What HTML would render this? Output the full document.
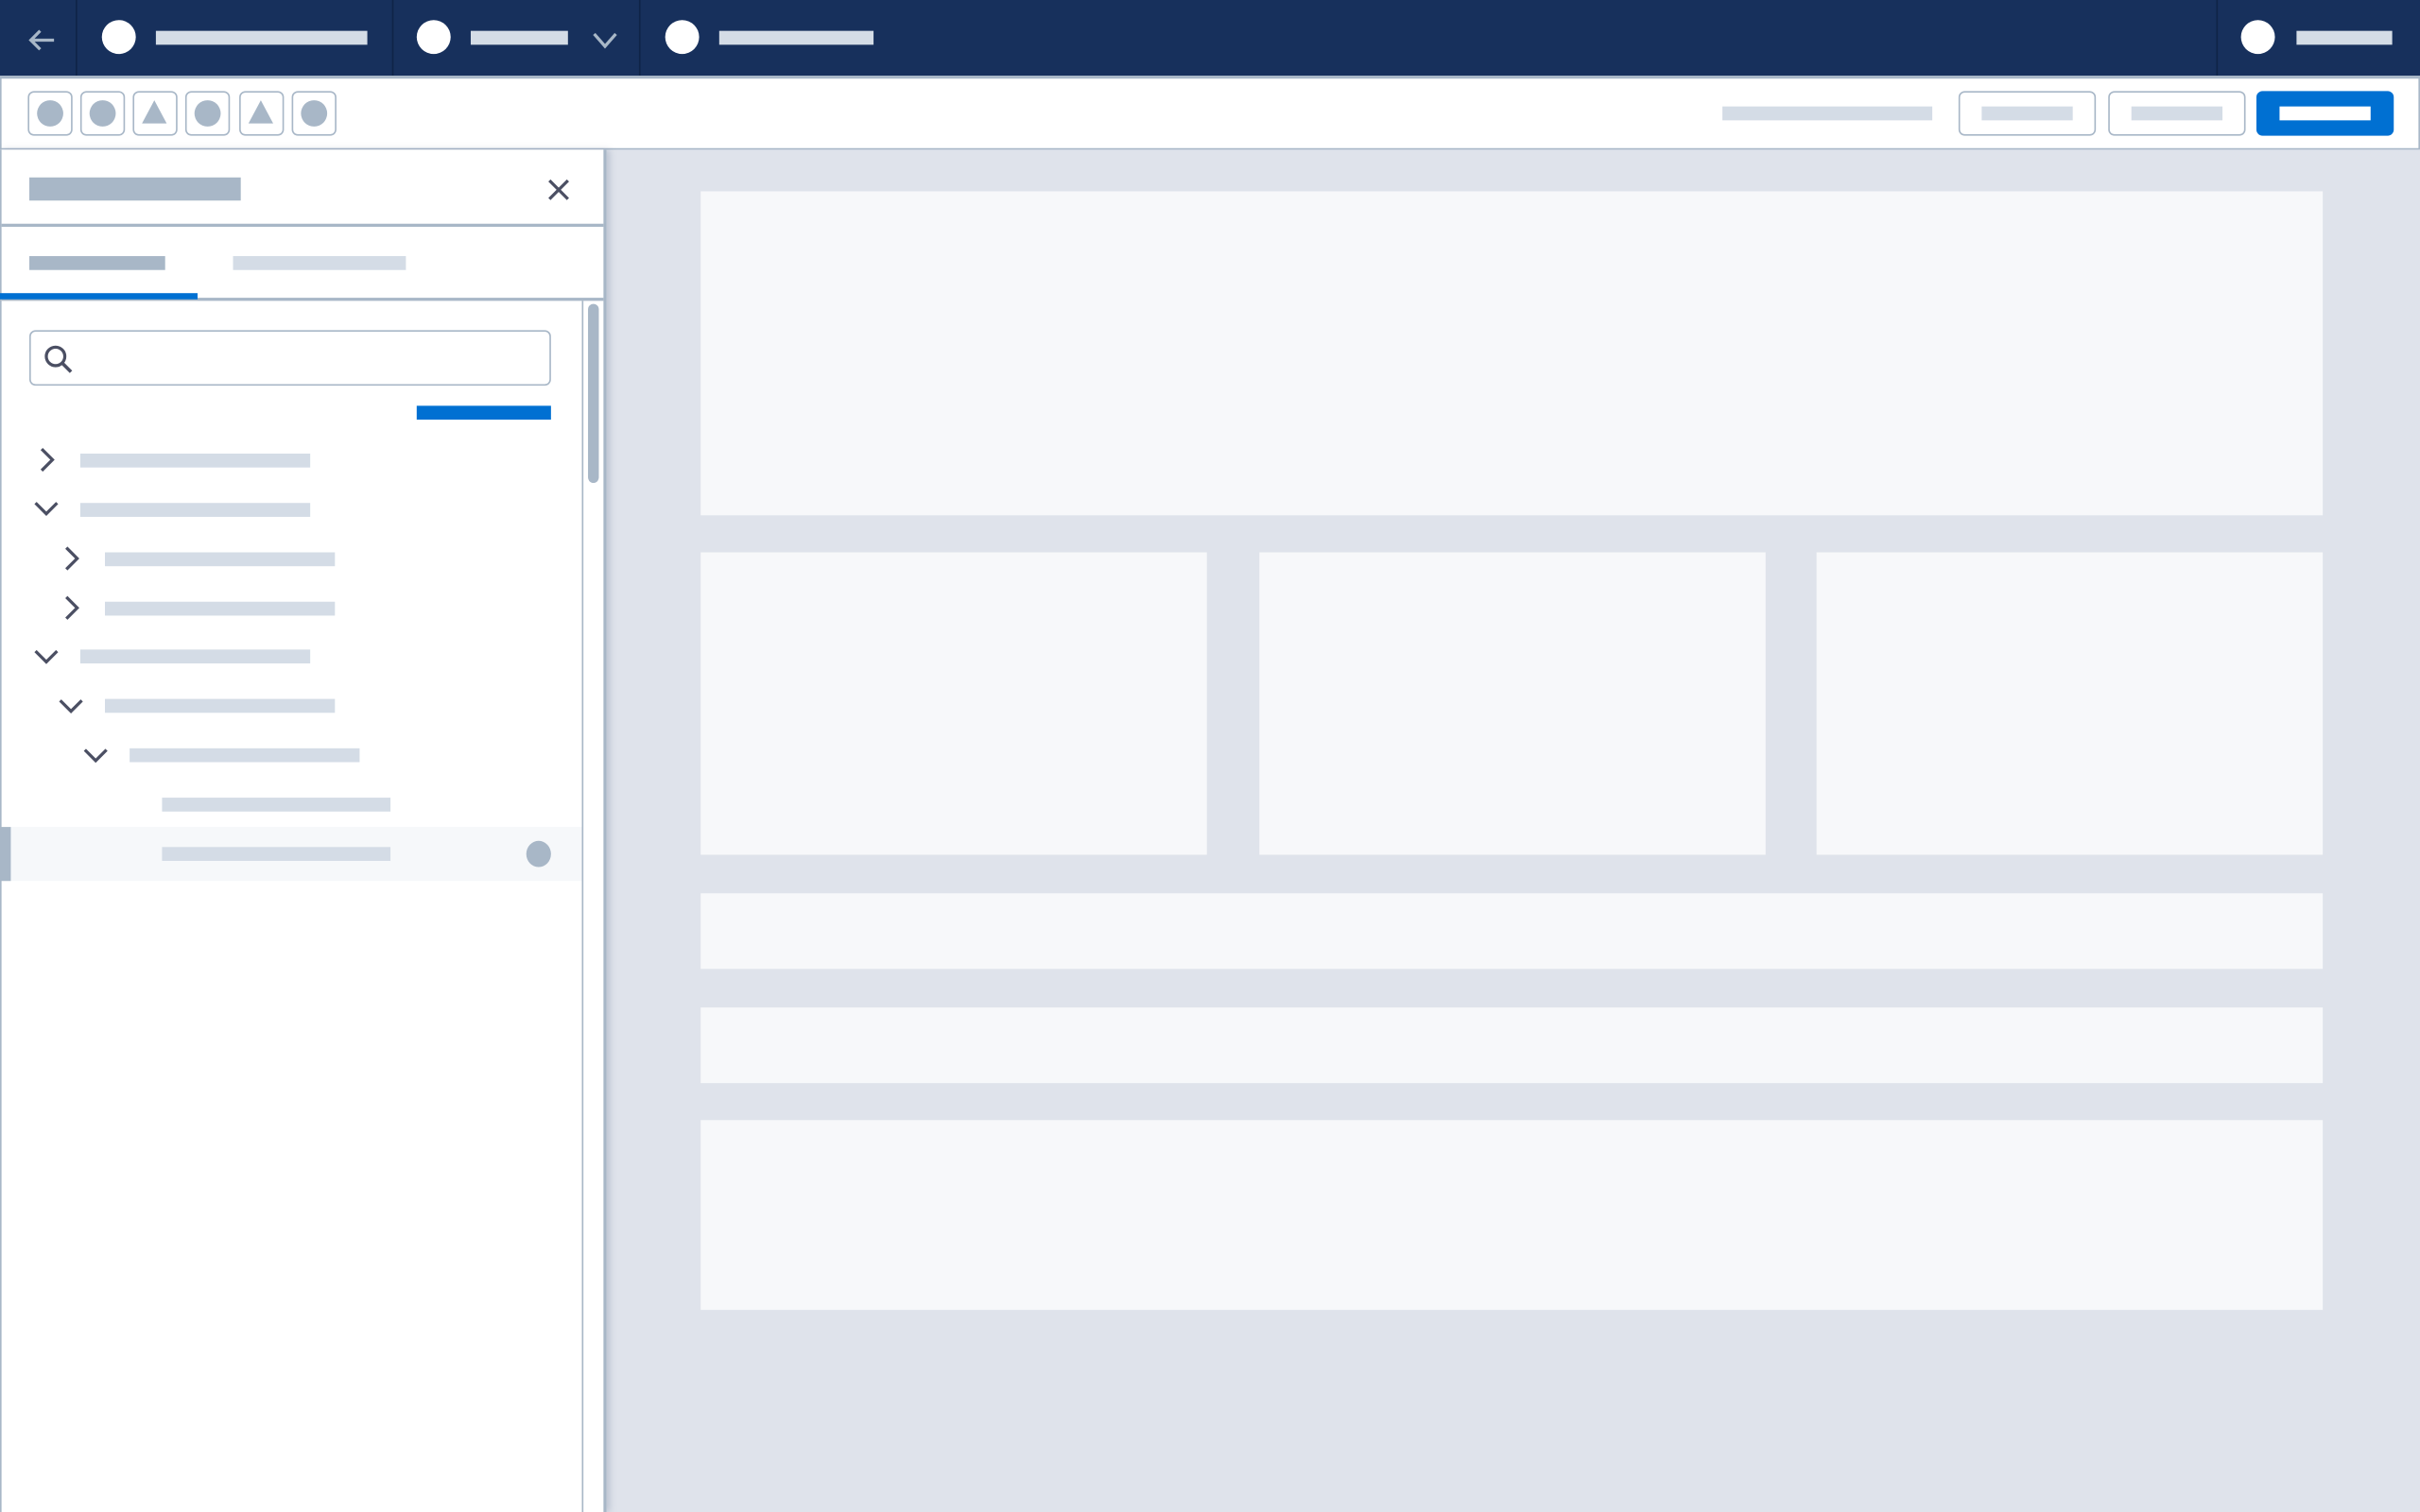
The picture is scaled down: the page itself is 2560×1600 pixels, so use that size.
<!DOCTYPE html>
<html><head><style>
html,body{margin:0;padding:0;width:2560px;height:1600px;overflow:hidden;background:#dfe3eb;font-family:"Liberation Sans",sans-serif}
#s{position:absolute;left:0;top:0;width:1568px;height:980px;transform:scale(1.632653);transform-origin:0 0;background:#dfe3eb}
.a{position:absolute}
.b{position:absolute;height:9px;background:#d4dce6}
.c{position:absolute;border-radius:50%;background:#fff;width:22px;height:22px}
.card{position:absolute;background:#f7f8fa}
.ib{position:absolute;top:59px;width:27px;height:27px;border:1px solid #a8b7c7;border-radius:4px;background:#fff}
.ib i{position:absolute;left:5px;top:5px;width:17px;height:17px;border-radius:50%;background:#a8b7c7}
.ib u{position:absolute;left:5px;top:5px;width:0;height:0;border-left:8.5px solid transparent;border-right:8.5px solid transparent;border-bottom:15px solid #a8b7c7}
.ob{position:absolute;top:59px;width:87px;height:27px;border:1px solid #a8b7c7;border-radius:4px;background:#fff}
</style></head><body><div id="s">
<div class="a" style="left:0;top:0;width:1568px;height:49px;background:#17305c"></div>
<div class="a" style="left:49px;top:0;width:1px;height:49px;background:#0f2447"></div>
<div class="a" style="left:254px;top:0;width:1px;height:49px;background:#0f2447"></div>
<div class="a" style="left:414px;top:0;width:1px;height:49px;background:#0f2447"></div>
<div class="a" style="left:1436px;top:0;width:1px;height:49px;background:#0f2447"></div>
<svg class="a" style="left:16px;top:15px" width="22" height="22" viewBox="0 0 22 22"><path d="M19 11H4M10 5L4 11L10 17" stroke="#a8b7c7" stroke-width="2" fill="none"/></svg>
<div class="c" style="left:66px;top:13px"></div><div class="b" style="left:101px;top:20px;width:137px"></div>
<div class="c" style="left:270px;top:13px"></div><div class="b" style="left:305px;top:20px;width:63px"></div>
<svg class="a" style="left:383px;top:19px" width="18" height="14" viewBox="0 0 18 14"><path d="M2 3L9 11L16 3" stroke="#a8b7c7" stroke-width="2" fill="none"/></svg>
<div class="c" style="left:431px;top:13px"></div><div class="b" style="left:466px;top:20px;width:100px"></div>
<div class="c" style="left:1452px;top:13px"></div><div class="b" style="left:1488px;top:20px;width:62px"></div>
<div class="a" style="left:0;top:49px;width:1568px;height:48px;background:#fff;border-top:2px solid #a8b7c7;border-bottom:1px solid #a8b7c7;box-sizing:border-box;border-left:1px solid #a8b7c7;border-right:1px solid #a8b7c7"></div>
<div class="ib" style="left:18px"><i></i></div>
<div class="ib" style="left:52px"><i></i></div>
<div class="ib" style="left:86px"><u></u></div>
<div class="ib" style="left:120px"><i></i></div>
<div class="ib" style="left:155px"><u></u></div>
<div class="ib" style="left:189px"><i></i></div>
<div class="b" style="left:1116px;top:69px;width:136px"></div>
<div class="ob" style="left:1269px"><div class="b" style="left:14px;top:9px;width:59px"></div></div>
<div class="ob" style="left:1366px"><div class="b" style="left:14px;top:9px;width:59px"></div></div>
<div class="a" style="left:1462px;top:59px;width:89px;height:29px;background:#0070d2;border-radius:4px"><div class="b" style="left:15px;top:10px;width:59px;background:#fff"></div></div>
<div class="a" style="left:0;top:97px;width:393px;height:883px;background:#fff;border-left:1px solid #a8b7c7;border-right:2px solid #a8b7c7;box-sizing:border-box;box-shadow:2px 0 4px rgba(120,135,160,.35)"></div>
<div class="a" style="left:19px;top:115px;width:137px;height:15px;background:#a8b7c7"></div>
<svg class="a" style="left:353px;top:114px" width="18" height="18" viewBox="0 0 18 18"><path d="M3 3L15 15M15 3L3 15" stroke="#4b4f63" stroke-width="2"/></svg>
<div class="a" style="left:1px;top:145px;width:390px;height:2px;background:#a8b7c7"></div>
<div class="a" style="left:19px;top:166px;width:88px;height:9px;background:#a8b7c7"></div>
<div class="b" style="left:151px;top:166px;width:112px"></div>
<div class="a" style="left:1px;top:193px;width:390px;height:2px;background:#a8b7c7"></div>
<div class="a" style="left:0;top:190px;width:128px;height:4px;background:#0070d2"></div>
<div class="a" style="left:377px;top:195px;width:1px;height:785px;background:#a8b7c7"></div>
<div class="a" style="left:381px;top:197px;width:7px;height:116px;background:#a8b7c7;border-radius:4px"></div>
<div class="a" style="left:19px;top:214px;width:338px;height:36px;border:1px solid #a8b7c7;border-radius:4px;box-sizing:border-box"></div>
<svg class="a" style="left:27px;top:222px" width="22" height="22" viewBox="0 0 22 22"><circle cx="9" cy="9" r="6" stroke="#4b4f63" stroke-width="2" fill="none"/><path d="M13.5 13.5L19 19" stroke="#4b4f63" stroke-width="2.2"/></svg>
<div class="a" style="left:270px;top:263px;width:87px;height:9px;background:#0070d2"></div>
<svg class="a" style="left:0;top:280px" width="380" height="300" viewBox="0 280 380 300" fill="none" stroke="#4b4f63" stroke-width="2">
<path d="M27 291L34 298L27 305"/>
<path d="M23 326L30 333L37 326"/>
<path d="M43 355L50 362L43 369"/>
<path d="M43 387L50 394L43 401"/>
<path d="M23 422L30 429L37 422"/>
<path d="M39 454L46 461L53 454"/>
<path d="M55 486L62 493L69 486"/>
</svg>
<div class="b" style="left:52px;top:294px;width:149px"></div>
<div class="b" style="left:52px;top:326px;width:149px"></div>
<div class="b" style="left:68px;top:358px;width:149px"></div>
<div class="b" style="left:68px;top:390px;width:149px"></div>
<div class="b" style="left:52px;top:421px;width:149px"></div>
<div class="b" style="left:68px;top:453px;width:149px"></div>
<div class="b" style="left:84px;top:485px;width:149px"></div>
<div class="b" style="left:105px;top:517px;width:148px"></div>
<div class="a" style="left:1px;top:536px;width:376px;height:35px;background:#f6f8fa"></div>
<div class="a" style="left:0;top:536px;width:7px;height:35px;background:#a8b7c7"></div>
<div class="b" style="left:105px;top:549px;width:148px"></div>
<div class="a" style="left:341px;top:545px;width:16px;height:17px;border-radius:50%;background:#a8b7c7"></div>
<div class="card" style="left:454px;top:124px;width:1051px;height:210px"></div>
<div class="card" style="left:454px;top:358px;width:328px;height:196px"></div>
<div class="card" style="left:816px;top:358px;width:328px;height:196px"></div>
<div class="card" style="left:1177px;top:358px;width:328px;height:196px"></div>
<div class="card" style="left:454px;top:579px;width:1051px;height:49px"></div>
<div class="card" style="left:454px;top:653px;width:1051px;height:49px"></div>
<div class="card" style="left:454px;top:726px;width:1051px;height:123px"></div>
</div></body></html>
